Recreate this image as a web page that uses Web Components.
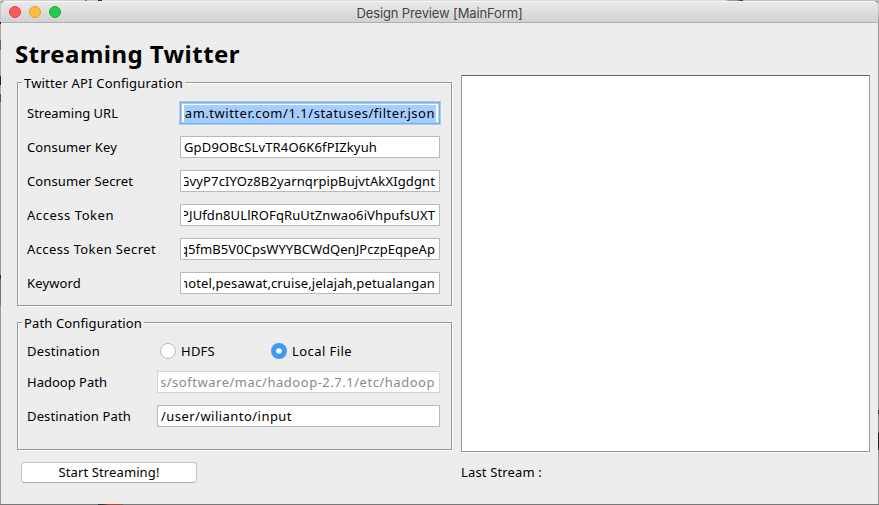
<!DOCTYPE html>
<html lang="en">
<head>
<meta charset="utf-8">
<title>Design Preview [MainForm]</title>
<style>
html, body { margin: 0; width: 879px; height: 505px; overflow: hidden; }
body { font: 13px/16px "Noto Sans", "Open Sans", sans-serif; color: #000; }
</style>
</head>
<body>
<app-window caption="Design Preview [MainForm]">
  <div slot="left">
    <h1 style="margin:0;font:bold 24px/30px 'Noto Sans','Open Sans',sans-serif;padding:16px 0 13px 14px;height:30px;box-sizing:content-box"><fit-text w="225">Streaming Twitter</fit-text></h1>
    <group-box style="height:224px" w="159" caption="Twitter API Configuration">
      <form-row label="Streaming URL" w="91"><text-field focused w="258">eam.twitter.com/1.1/statuses/filter.json</text-field></form-row>
      <form-row label="Consumer Key" w="90"><text-field start w="193">GpD9OBcSLvTR4O6K6fPIZkyuh</text-field></form-row>
      <form-row label="Consumer Secret" w="106"><text-field w="255">GvyP7cIYOz8B2yarnqrpipBujvtAkXIgdgnt</text-field></form-row>
      <form-row label="Access Token" w="87"><text-field w="254">PJUfdn8ULlROFqRuUtZnwao6iVhpufsUXT</text-field></form-row>
      <form-row label="Access Token Secret" w="129"><text-field w="255">q5fmB5V0CpsWYYBCWdQenJPczpEqpeAp</text-field></form-row>
      <form-row label="Keyword" w="54"><text-field w="255">hotel,pesawat,cruise,jelajah,petualangan</text-field></form-row>
    </group-box>
    <group-box style="height:128px;margin-top:16px" w="118" caption="Path Configuration" class="path">
      <form-row label="Destination" w="73" style="--col:133px;height:16px;margin:12px 0 12px"><radio-pair></radio-pair></form-row>
      <form-row label="Hadoop Path" w="80" style="--col:130px"><text-field disabled w="275">s/software/mac/hadoop-2.7.1/etc/hadoop</text-field></form-row>
      <form-row label="Destination Path" w="104" style="--col:130px"><text-field start w="131">/user/wilianto/input</text-field></form-row>
    </group-box>
    <push-button w="101">Start Streaming!</push-button>
  </div>
  <stream-log slot="right"></stream-log>
</app-window>

<script>
const define = (name, html, setup) => {
  const template = document.createElement('template');
  template.innerHTML = html;
  customElements.define(name, class extends HTMLElement {
    connectedCallback() {
      if (this.shadowRoot) return;
      const root = this.attachShadow({ mode: 'open' });
      root.append(template.content.cloneNode(true));
      if (setup) setup(this, root);
    }
  });
};

// Text tracked evenly to fill a given width
define('fit-text', `<style>
:host { display: inline-block; white-space: pre; vertical-align: top; }
</style><slot></slot>`, host => {
  const n = host.textContent.length;
  const range = document.createRange();
  range.selectNodeContents(host);
  const width = range.getBoundingClientRect().width;
  if (width) host.style.letterSpacing = (Number(host.getAttribute('w')) - width) / n + 'px';
});

const addFit = (slotEl, text, w) => {
  const t = document.createElement('fit-text');
  t.setAttribute('w', w);
  t.textContent = text;
  slotEl.append(t);
};

define('title-bar', `<style>
:host { display: grid; grid-template-columns: 1fr auto 1fr; align-items: center; height: 22px; box-sizing: border-box;
  border-top: 1px solid #f6f6f6; border-bottom: 1px solid #b0b0b0; border-radius: 5px 5px 0 0;
  background: linear-gradient(#e9e9e9, #d2d2d2); color: #454545; font: 13px/18px Inter, sans-serif; }
.lights { display: flex; gap: 8px; padding-left: 8px; }
i { width: 12px; height: 12px; border-radius: 50%; box-sizing: border-box; }
.close { background: #fc5b57; border: 1px solid #df4744; }
.min { background: #fdbe3d; border: 1px solid #de9f34; }
.max { background: #26c94b; border: 1px solid #1eac33; }
.t { padding-top: 1px; }
</style><div class="lights"><i class="close"></i><i class="min"></i><i class="max"></i></div><div class="t"></div>`,
(host, root) => addFit(root.querySelector('.t'), host.getAttribute('caption'), 166));

define('app-window', `<style>
:host { display: block; box-sizing: border-box; width: 879px; height: 505px; padding: 1px 1px 1px 1px;
  background: linear-gradient(90deg, #d0d0d0 85px, #777 85px 87px, #c8c8cc 87px 98px, #333 98px 102px, #ddd 102px 725px, #999 729px 737px, #444 740px 743px, #c0c0c4 743px) 0 0 / 100% 1px no-repeat,
    linear-gradient(90deg, #777 98px, #333 98px 103px, #a54b40 109px 123px, #777 123px) 0 100% / 100% 1px no-repeat,
    linear-gradient(#c8c8c8 22px, #222 22px 24px, #aaa 24px 40px, #666 40px 50px, #aaa 50px 75px, #222 77px 85px, #aaa 85px 94px, #555 94px 102px, #999 102px 275px, #333 275px 278px, #777 280px 305px, #999 306px) 0 0 / 1px 100% no-repeat,
    linear-gradient(#c8c8c8 8px, #999 24px 410px, #333 410px 414px, #888 414px 432px, #222 433px 450px, #999 450px) 100% 0 / 1px 100% no-repeat, #999; }
.frame { height: 503px; display: flex; flex-direction: column; background: #ededed; border-radius: 5px 5px 0 0; overflow: hidden; }
main { flex: 1; display: grid; grid-template-columns: 460px 1fr; min-height: 0; }
</style><div class="frame"><title-bar></title-bar><main><slot name="left"></slot><slot name="right"></slot></main></div>`,
(host, root) => {
  const old = root.querySelector('title-bar');
  const bar = document.createElement('title-bar');
  bar.setAttribute('caption', host.getAttribute('caption'));
  old.replaceWith(bar);
});

define('group-box', `<style>
:host { display: block; box-sizing: border-box; width: 435px; margin-left: 16px;
  border: 1px solid #999; box-shadow: 1px 1px #fff, inset 1px 1px #fff; }
.cap { height: 16px; width: max-content; margin: -8px 0 11px 4px; padding: 0 2px; background: #ededed; }
</style><div class="cap"></div><slot></slot>`,
(host, root) => addFit(root.querySelector('.cap'), host.getAttribute('caption'), host.getAttribute('w')));

define('form-row', `<style>
:host { display: grid; grid-template-columns: var(--col, 153px) 1fr; align-items: center; height: 22px;
  padding: 0 11px 0 9px; margin-bottom: 12px; }
.label { height: 16px; }
</style><div class="label"></div><slot></slot>`,
(host, root) => addFit(root.querySelector('.label'), host.getAttribute('label'), host.getAttribute('w')));

define('text-field', `<style>
:host { display: flex; justify-content: flex-end; box-sizing: border-box; height: 22px; min-width: 0;
  background: #fff; border: 1px solid #bababa; padding: 2px 3px 1px; }
:host([start]) { justify-content: flex-start; }
:host([disabled]) { border-color: #d5d5d5; color: #8a8a8a; }
:host([focused]) { border-color: #79ade6; box-shadow: 0 0 0 1px #a9cdf3, inset 0 0 0 1px #a5cdf7; }
.view { display: flex; justify-content: inherit; flex: 1; min-width: 0; overflow: hidden; height: 17px;
  box-sizing: border-box; padding-right: 1px; }
:host([focused]) .view { background: #a5cdff; }
</style><div class="view"></div><slot hidden></slot>`,
(host, root) => {
  const text = host.textContent;
  addFit(root.querySelector('.view'), text, host.getAttribute('w'));
});

define('radio-pair', `<style>
:host { display: grid; grid-template-columns: 111px auto; height: 16px; }
div { display: flex; gap: 5px; }
svg { display: block; width: 16px; height: 16px; }
</style>
<div><svg viewBox="0 0 16 16"><circle cx="8" cy="8" r="7.5" fill="#fff" stroke="#b9b9b9"/></svg><fit-text w="34">HDFS</fit-text></div>
<div><svg viewBox="0 0 16 16"><circle cx="8" cy="8" r="8" fill="#3d99fc"/><circle cx="8" cy="8" r="2.8" fill="#fff"/></svg><fit-text w="60">Local File</fit-text></div>`);

define('push-button', `<style>
:host { display: flex; justify-content: center; box-sizing: border-box; width: 176px; height: 21px; margin: 12px 0 0 20px;
  padding-top: 1px; background: #fff; border: 1px solid #c6c6c6; border-bottom-color: #acacac; border-radius: 4px; }
</style><div class="t"></div>`,
(host, root) => addFit(root.querySelector('.t'), host.textContent, host.getAttribute('w')));

define('stream-log', `<style>
:host { display: block; padding-top: 52px; }
.area { box-sizing: border-box; width: 409px; height: 377px; background: #fff; border: 1px solid #999;
  border-top-color: #666; box-shadow: 0 1px #fafafa; }
.status { margin-top: 12px; }
</style><div class="area"></div><div class="status"><fit-text w="81">Last Stream :</fit-text></div>`);
</script>
</body>
</html>
